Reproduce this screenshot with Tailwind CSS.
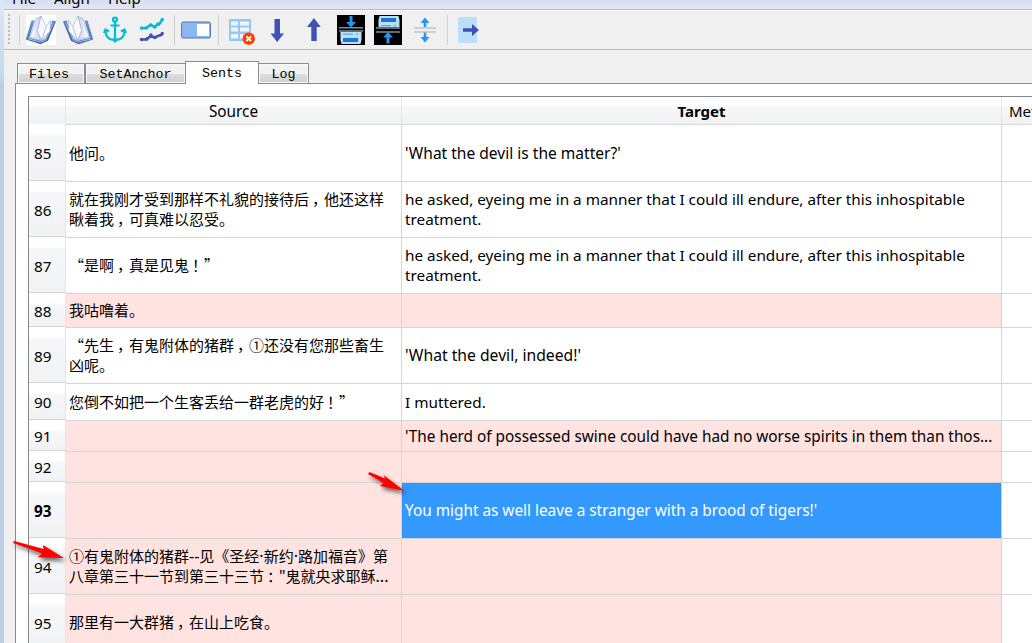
<!DOCTYPE html>
<html lang="zh-CN">
<head>
<meta charset="utf-8">
<title>Align</title>
<script src="https://cdn.jsdelivr.net/npm/@tailwindcss/browser@4"></script>
</head>
<body class="relative flex h-[643px] w-[1032px] overflow-hidden bg-[#f0f0f0] font-['Noto_Sans','Noto_Sans_CJK_SC',sans-serif] text-[15px] leading-5 text-black">
<div class="w-1 shrink-0 bg-linear-to-b from-[#dbe7f5] from-0% via-[#c5d8ee] via-12% to-[#bad1e9] to-13%"></div>
<div class="flex min-w-0 flex-1 flex-col">
  <nav class="flex h-[10px] shrink-0 items-end gap-[18px] overflow-hidden border-b border-[#b3b8cf] bg-linear-to-b from-[#d9def0] to-[#e2e6f5] pl-2 whitespace-nowrap">
    <span class="mb-px h-5 w-[24px]">File</span><span class="mb-px h-5 w-[36px]">Align</span><span class="mb-px h-5">Help</span>
  </nav>
  <!-- toolbar -->
  <div class="h-10 shrink-0 border-t border-b border-t-white border-b-[#b8b8b8]">
    <svg class="block" width="1028" height="38" viewBox="4 11 1028 38">
      <defs>
        <linearGradient id="pg" x1="0" y1="0" x2="1" y2="0"><stop offset="0" stop-color="#fff"/><stop offset="1" stop-color="#c3cdea"/></linearGradient>
        <linearGradient id="pb" x1="0" y1="0" x2="1" y2="1"><stop offset="0" stop-color="#6f9cd2"/><stop offset="1" stop-color="#2450a0"/></linearGradient>
        <g id="book">
          <path d="M31.500 20.500 25.800 39.500 40.500 44.200 48 40.800 56 21.500 52 20.500 42 40 30 37.500 34.500 20.500Z" fill="url(#pb)"/>
          <path d="M34.500 20.500 29 38 41.500 41 45.500 39 52.500 21.500 50 20.500 45.500 27 40 17Z" fill="#dde4f4"/>
          <path d="M36 18.500 30 37 41.500 40.500 37.500 31 41 16.500Z" fill="url(#pg)" stroke="#9aa8cf" stroke-width=".6"/>
          <path d="M41 16 37.500 31 41.500 40.500 46.500 27Z" fill="#f7f9fe" stroke="#9aa8cf" stroke-width=".6"/>
          <path d="M46 27 50.500 20.500 50 31 42 40.500Z" fill="#fff" stroke="#9aa8cf" stroke-width=".6"/>
          <path d="M28 38.800 41 42.200 45.800 40 53.500 22.500" fill="none" stroke="#d3e0f3" stroke-width=".7"/>
        </g>
      </defs>
      <path d="M9 14v31" stroke="#bcbcbc" stroke-width="2" stroke-dasharray="2 2"/>
      <path d="M19.500 15v30M174.500 15v30M218.500 15v30M447.500 15v30" stroke="#d0d0d0"/>
      <rect x="26" y="15" width="30" height="30" fill="#fff"/>
      <use href="#book"/>
      <use href="#book" transform="translate(119 0) scale(-1 1)"/>
      <g fill="none" stroke="#00bcd4" stroke-width="2.200">
        <circle cx="115" cy="19.500" r="2"/><path d="M115 22v18M110.500 25.500h9M105.500 31.500c.5 6 4 8.500 9.500 8.500s9-2.500 9.500-8.500M104 33l1.500-3.500 3.500 2M126 33l-1.500-3.500-3.500 2M112.500 39l2.500 2.500 2.500-2.500"/>
      </g>
      <g fill="none" stroke-width="2.500" stroke-linejoin="round">
        <path d="m141.500 28.500 5-.8 4-3 4 2.500 3-3 1.500.3 3.500-5" stroke="#00bcd4"/>
        <path d="m141.500 39.500 5 0 4-3.500 4 1.500 3.500-1.500 4.500-1.500" stroke="#3f51b5"/>
      </g>
      <g fill="#00bcd4"><circle cx="141.500" cy="28" r="1.700"/><circle cx="146.500" cy="28" r="1.700"/><circle cx="151" cy="25" r="1.700"/><circle cx="155" cy="27" r="1.700"/><circle cx="158" cy="24" r="1.700"/><circle cx="162.300" cy="19.500" r="1.700"/></g>
      <g fill="#3f51b5"><circle cx="141.500" cy="39.500" r="1.700"/><circle cx="146.500" cy="39" r="1.700"/><circle cx="151" cy="35" r="1.700"/><circle cx="155" cy="37.500" r="1.700"/><circle cx="162.300" cy="33.500" r="1.700"/></g>
      <rect x="181.500" y="22" width="29" height="16" rx="1.500" fill="#8bb7f0" stroke="#4e7ab5"/>
      <rect x="197" y="24" width="12" height="12" fill="#fff"/>
      <path fill="#90caf9" d="M229 19h22v22h-22z"/>
      <path fill="#f3f3f3" d="M231 21.500h7v4h-7zM240 21.500h9v4h-9zM231 27.500h7v4h-7zM240 27.500h9v4h-9zM231 34h7v4.500h-7zM240 34h9v4.500h-9z"/>
      <circle cx="248.700" cy="38.700" r="6.200" fill="#ff3d00"/>
      <path d="m246.400 36.400 4.600 4.600m0-4.600-4.600 4.600" stroke="#fff" stroke-width="2"/>
      <path fill="#3f51b5" d="M274.500 19h5.500v14.500h4L277.200 42 270.500 33.500h4z"/>
      <path fill="#3f51b5" d="M311.300 41h5.400V27h4L314 18l-7 9h4.300z"/>
      <path d="M337 15h28v30h-28zM374 15h28v30h-28z" fill="#000"/>
      <g fill="#2196f3"><path d="M349.500 16h3v6h3.500l-5 5.500-5-5.500h3.500zM386.500 43.500h3v-6h3.500l-5-5.500-5 5.500h3.500z"/></g>
      <path d="M339 27.800h24M339 31h24M376 28h24M376 32h24" stroke="#78909c" stroke-width="1.500"/>
      <path d="M340.500 32h21v8l-1 4h-19l-1-4zM378.500 27h21v-7l-1-4h-19l-1 4z" fill="#bbdefb"/>
      <path d="M343 38h15v4h-15zM381 18h15v4h-15z" fill="#1976d2"/>
      <path d="M343 33.500h10v1.300h-10zM356 33.500h2v1.300h-2zM381 25h10v1.300h-10zM394 25h2v1.300h-2z" fill="#64a5e8"/>
      <path d="M414 28h22M414 32h22" stroke="#b8c6d0" stroke-width="1.700"/>
      <path fill="#2196f3" d="M423.700 27v-4h-3.200l4.500-5.500 4.500 5.500h-3.200V27zM423.700 32.500v4.500h-3.200l4.500 5.500 4.500-5.500h-3.200v-4.500z"/>
      <rect x="458" y="17" width="19" height="26" rx="1.500" fill="#bbdefb"/>
      <path fill="#3f51b5" d="M463 28.200h9v-4.200l7 6-7 6v-4.200h-9z"/>
    </svg>
  </div>
  <!-- tabs -->
  <div class="mt-[11px] ml-[13px] flex h-[22px] shrink-0 items-end font-['Liberation_Mono',monospace] text-[13.33px]">
    <div class="h-[20px] w-[68px] border border-b-0 border-[#898c95] bg-linear-to-b from-[#f2f2f2] from-50% via-[#dedede] via-51% to-[#cfcfcf] text-center leading-[21px] pr-1 shadow-[inset_0_0_0_1px_#f8f8f8]">Files</div>
    <div class="h-[20px] w-[101px] border border-b-0 border-[#898c95] bg-linear-to-b from-[#f2f2f2] from-50% via-[#dedede] via-51% to-[#cfcfcf] text-center leading-[21px] shadow-[inset_0_0_0_1px_#f8f8f8]">SetAnchor</div>
    <div class="z-10 -mb-px -ml-px h-[23px] w-[74px] border border-b-0 border-[#898c95] bg-white text-center leading-[23px]">Sents</div>
    <div class="h-[20px] w-[50px] border border-b-0 border-l-0 border-[#898c95] bg-linear-to-b from-[#f2f2f2] from-50% via-[#dedede] via-51% to-[#cfcfcf] text-center leading-[21px] shadow-[inset_0_0_0_1px_#f8f8f8]">Log</div>
  </div>
  <div class="ml-[11px] flex-1 overflow-hidden border-t border-l border-[#898c95] bg-white pt-3 pl-3">
    <div class="h-full w-[1004px] border-t border-l border-[#828790]">
      <div class="flex h-[28px] border-b border-[#d5d5d5] bg-linear-to-b from-white from-32% via-[#f7f8fa] via-33% to-[#f1f2f4]">
        <div class="w-[37px] border-r border-[#e4e5e6]"></div>
        <div class="w-[336px] border-r border-[#e4e5e6] pt-1 text-center text-[15.35px]">Source</div>
        <div class="w-[600px] border-r border-[#e4e5e6] pt-1 text-center font-bold">Target</div>
        <div class="flex-1 overflow-hidden pt-1 pl-[7px]">Meta</div>
      </div>
      <div id="rows"></div>
    </div>
  </div>
</div>
<!-- red pointer arrows -->
<svg class="absolute inset-0" width="1032" height="643">
  <defs><filter id="sh" x="-20%" y="-30%" width="150%" height="190%"><feDropShadow dx="2" dy="3" stdDeviation="2" flood-color="#000" flood-opacity=".6"/></filter></defs>
  <g fill="#f00" filter="url(#sh)">
    <path d="M368 474 369.500 472 385 478.500 383.500 475 404.500 491 380 486 383.500 483Z"/>
    <path d="M13 543 14 541 43.500 549 43 545 64 558 37.700 557.300 42 553.500Z"/>
  </g>
</svg>
<script>
const P = '#ffe3e0', W = '#fff';
// number, height, background, source lines, target lines, target font size
const rows = [
  [85, 57, W, ['他问。'], ["'What the devil is the matter?'"], 15.55],
  [86, 56, W, ['就在我刚才受到那样不礼貌的接待后，他还这样', '瞅着我，可真难以忍受。'], ['he asked, eyeing me in a manner that I could ill endure, after this inhospitable', 'treatment.'], 15.3],
  [87, 56, W, ['“是啊，真是见鬼！”'], ['he asked, eyeing me in a manner that I could ill endure, after this inhospitable', 'treatment.'], 15.3],
  [88, 34, P, ['我咕噜着。'], [], 15],
  [89, 56, W, ['“先生，有鬼附体的猪群，①还没有您那些畜生', '凶呢。'], ["'What the devil, indeed!'"], 15.7],
  [90, 37, W, ['您倒不如把一个生客丢给一群老虎的好！”'], ['I muttered.'], 15.3],
  [91, 31, P, [], ["'The herd of possessed swine could have had no worse spirits in them than thos..."], 15.35],
  [92, 31, P, [], [], 15],
  [93, 56, P, [], ["You might as well leave a stranger with a brood of tigers!'"], 15.35],
  [94, 56, P, ['①有鬼附体的猪群--见《圣经·新约·路加福音》第', '八章第三十一节到第三十三节："鬼就央求耶稣...'], [], 15],
  [95, 56, P, ['那里有一大群猪，在山上吃食。'], [], 15],
];
const zh = s => s.replace(/[，！：]|--|·|"|\.\.\./g, m => '，！：'.includes(m)
  ? `<span class="inline-block translate-x-[3px]">${m}</span>`
  : `<span class="font-['Noto_Sans'] text-[16px]">${m}</span>`);
const line = s => `<div>${s}</div>`;
document.getElementById('rows').innerHTML = rows.map(([n, h, c, a, b, fs]) => `
<div class="flex" style="height:${h}px">
  <div class="-mt-px mb-px flex w-[37px] items-center border-r border-b border-b-[#d5d5d5] border-r-[#e4e5e6] bg-linear-to-b from-white from-[10px] via-[#f7f8fa] via-[11px] to-[#f1f2f4] pt-[2px] pl-[5px] text-[15.3px] ${n === 93 ? 'font-bold' : ''}">${n}</div>
  <div class="flex w-[336px] flex-col justify-center border-r border-b border-[#d5d5d5] pb-px pl-[3px] font-['Noto_Sans_CJK_SC',sans-serif] whitespace-nowrap" style="background:${c}">${a.map(zh).map(line).join('')}</div>
  <div class="relative flex w-[600px] flex-col justify-center border-r border-b border-[#d5d5d5] pb-px pl-[3px] whitespace-nowrap ${n === 93 ? 'text-white' : ''}" style="background:${n === 93 ? '#3399ff' : c};font-size:${fs}px">${b.map(line).join('')}${n === 93 ? '<i class="absolute inset-0 border border-dotted border-[#b5703a]"></i>' : ''}</div>
  <div class="flex-1 border-b border-[#d5d5d5]"></div>
</div>`).join('');
</script>
</body>
</html>
